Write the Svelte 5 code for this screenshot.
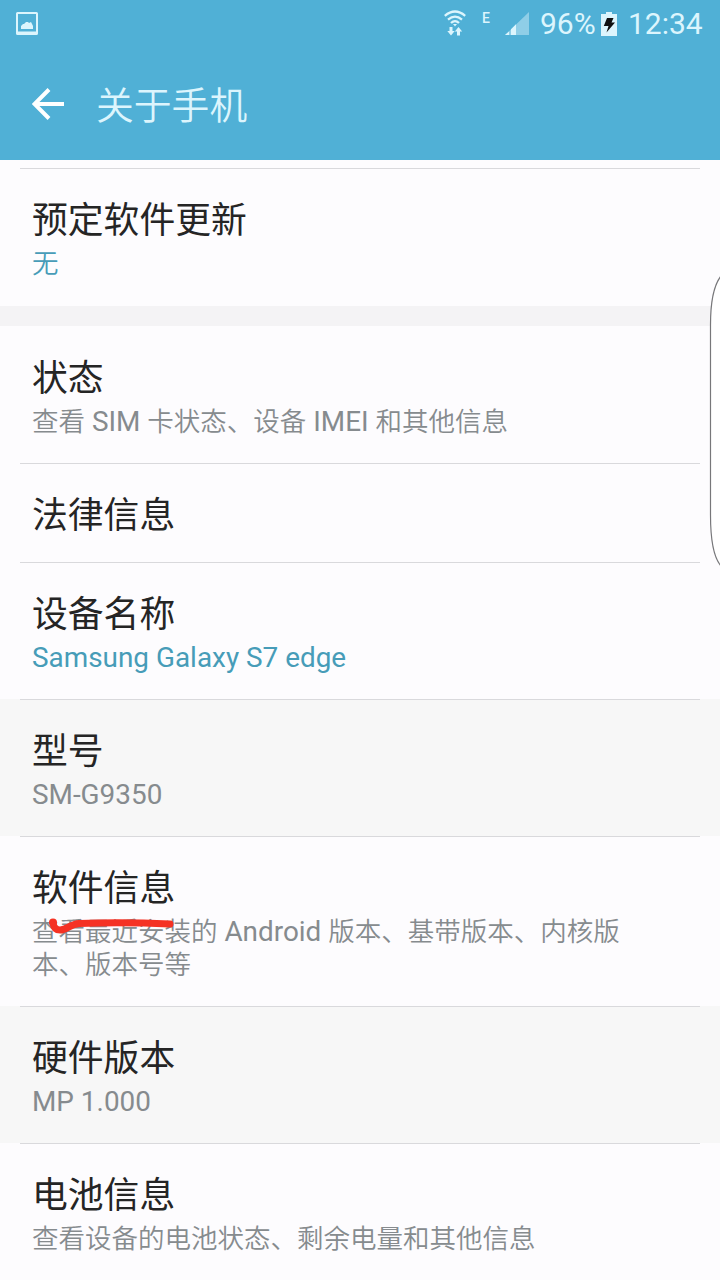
<script>
	const groups = [
		[{ title: "预定软件更新", summary: ["无"], link: true }],
		[
			{ title: "状态", summary: ["查看 SIM 卡状态、设备 IMEI 和其他信息"] },
			{ title: "法律信息", summary: [] },
			{ title: "设备名称", summary: ["Samsung Galaxy S7 edge"], link: true },
			{ title: "型号", summary: ["SM-G9350"], disabled: true },
			{
				title: "软件信息",
				summary: ["查看最近安装的 Android 版本、基带版本、内核版", "本、版本号等"],
				marked: true,
			},
			{ title: "硬件版本", summary: ["MP 1.000"], disabled: true },
			{ title: "电池信息", summary: ["查看设备的电池状态、剩余电量和其他信息"] },
		],
	];

	// latin runs are set slightly larger than the chinese text
	function split(text) {
		return text.split(/([ -~]+)/).filter((part) => part.length > 0);
	}
</script>

<div class="screen">
	<header>
		<div class="status">
			<svg class="picture" width="22" height="24" viewBox="0 0 22 24">
				<path fill-rule="evenodd" d="M1.5 0h19Q22 0 22 1.500v20Q22 23 20.500 23h-19Q0 23 0 21.500v-20Q0 0 1.500 0zM2 2v17.500h18V2z" />
				<path d="M5 17v-3l2-2h1l2-2h2l1 1 2-1 1 2 1 2v3z" />
			</svg>
			<svg class="wifi" width="22" height="26" viewBox="0 0 22 26">
				<g fill="none" stroke="#dcf5fd" stroke-width="2.300">
					<path d="M.8 5.800Q11-2.800 21.200 5.800" />
					<path d="M4 9.600Q11 3.600 18 9.600" />
					<path d="M7 13Q11 9.200 15 13" />
				</g>
				<path d="M9 14h4L11 16.500z" />
				<path d="M5.500 17h3v4h2.200l-3.700 4.500L3.300 21h2.200zM13 25.500v-4h-2.200l3.700-4.500 3.700 4.500h-2.200v4z" />
			</svg>
			<span class="network">E</span>
			<svg class="signal" width="25" height="24" viewBox="0 0 25 24">
				<path opacity=".45" d="M0 23L24 0v23z" />
				<path d="M0 23l4-3.500V23zM6 23v-5.700l5-5V23z" />
			</svg>
			<span class="percent">96%</span>
			<svg class="battery" width="16" height="24" viewBox="0 0 16 24">
				<path d="M5 0h6v2h5v22H0V2h5z" />
				<path fill="#111" d="M6 6h6.500l-2 4.500h3.500L5.500 20.500l2-6.500H2.800z" />
			</svg>
			<span class="clock">12:34</span>
		</div>
		<div class="bar">
			<svg class="back" width="32" height="32" viewBox="0 0 32 32">
				<path d="M17 1.500L2.500 16 17 30.500M2.500 16H32" fill="none" stroke="#fff" stroke-width="4" />
			</svg>
			<h1>关于手机</h1>
		</div>
	</header>

	<main>
		{#each groups as group}
			<section>
				{#each group as row}
					<div class="row" class:disabled={row.disabled}>
						<h2>{row.title}</h2>
						{#if row.summary.length}
							<div class="summary" class:link={row.link}>
								{#each row.summary as line}
									<p>{#each split(line) as part}<span class:latin={/^[ -~]/.test(part)}>{part}</span>{/each}</p>
								{/each}
							</div>
						{/if}
						{#if row.marked}
							<svg class="mark" width="128" height="18" viewBox="0 0 128 18">
								<path d="M5 5Q6 12 12 12C19 12 22 6 31 5.500Q75 4 122 6" />
								<circle cx="5" cy="4.500" r="4" />
							</svg>
						{/if}
					</div>
				{/each}
			</section>
		{/each}
	</main>

	<svg class="edge" width="12" height="296" viewBox="0 0 12 296">
		<path d="M12 3Q1.500 16 1.500 52V242Q1.500 281 12 293" />
	</svg>
</div>

<style>
	:global(body) {
		margin: 0;
	}

	.screen {
		position: relative;
		width: 720px;
		height: 1280px;
		overflow: hidden;
		background-color: #fdfcfe;
		font-family: Roboto, "Noto Sans CJK SC", sans-serif;
	}

	header {
		height: 160px;
		background-color: #50b0d6;
		color: #dcf5fd;
	}
	.status {
		display: flex;
		align-items: center;
		height: 47px;
		padding: 0 16px;
	}
	.status svg {
		fill: #dcf5fd;
		flex: none;
	}
	.status .wifi {
		margin-left: auto;
		margin-top: -2px;
	}
	.network {
		margin: -11px 14px 0 16px;
		font-size: 14px;
		font-weight: 500;
		width: 9px;
	}
	.percent {
		margin-left: 10px;
		width: 56px;
		font-size: 30px;
	}
	.battery {
		margin: 0 11px 0 5px;
	}
	.clock {
		width: 76px;
		font-size: 30px;
	}

	.bar {
		display: flex;
		align-items: center;
		height: 114px;
		padding-left: 32px;
	}
	.back {
		margin-right: 32px;
	}
	h1 {
		margin: 4px 0 0;
		font-size: 37.800px;
		font-weight: 350;
		line-height: 56px;
	}

	main {
		padding-top: 8px;
	}
	section {
		border-bottom: 20px solid #f4f3f5;
	}
	.row {
		position: relative;
		padding: 32px 32px 25px;
		background: linear-gradient(#d9d9dc, #d9d9dc) 20px 0 / 680px 1px no-repeat;
	}
	.row:last-child {
		padding-bottom: 26px;
	}
	section + section .row:first-child {
		background: none;
	}
	.row.disabled {
		background-color: #f7f7f7;
	}
	h2 {
		margin: 0;
		color: #252525;
		font-size: 35.800px;
		font-weight: 400;
		line-height: 42px;
	}
	.summary {
		margin-top: 5px;
		color: #868b8e;
		font-size: 26.500px;
		font-weight: 350;
	}
	.summary.link {
		color: #479cb8;
	}
	p {
		margin: 0;
		height: 33px;
		line-height: 33px;
		white-space: nowrap;
	}
	.latin {
		font-size: 27.900px;
		font-weight: 400;
	}

	.mark {
		position: absolute;
		left: 48px;
		top: 82px;
	}
	.mark path {
		fill: none;
		stroke: #f53224;
		stroke-width: 7;
		stroke-linecap: round;
	}
	.mark circle {
		fill: #f53224;
	}

	.edge {
		position: absolute;
		right: -1px;
		top: 273px;
	}
	.edge path {
		fill: #fff;
		stroke: #77777a;
		stroke-width: 1.200;
	}
</style>
